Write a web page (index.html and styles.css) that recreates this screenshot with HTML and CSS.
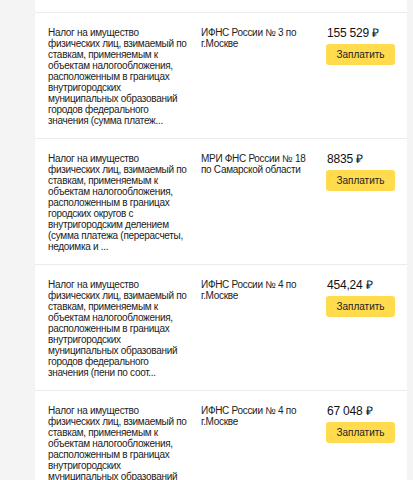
FILE: index.html
```html
<!DOCTYPE html>
<html lang="ru">
  <head>
    <meta charset="UTF-8" />
    <meta name="viewport" content="width=device-width, initial-scale=1.0" />
    <title>Налоги</title>
    <link rel="stylesheet" href="styles.css">
  </head>
  <body>
    <div class="card">
      <div class="card-top"></div>

      <div class="tax-row">
        <div class="tax-name">Налог на имущество<br>физических лиц, взимаемый по<br>ставкам, применяемым к<br>объектам налогообложения,<br>расположенным в границах<br>внутригородских<br>муниципальных образований<br>городов федерального<br>значения (сумма платеж...</div>
        <div class="tax-org">ИФНС России № 3 по<br>г.Москве</div>
        <div class="tax-pay">
          <div class="tax-sum">155 529 ₽</div>
          <button class="pay-btn">Заплатить</button>
        </div>
      </div>

      <div class="tax-row">
        <div class="tax-name">Налог на имущество<br>физических лиц, взимаемый по<br>ставкам, применяемым к<br>объектам налогообложения,<br>расположенным в границах<br>городских округов с<br>внутригородским делением<br>(сумма платежа (перерасчеты,<br>недоимка и ...</div>
        <div class="tax-org">МРИ ФНС России № 18<br>по Самарской области</div>
        <div class="tax-pay">
          <div class="tax-sum">8835 ₽</div>
          <button class="pay-btn">Заплатить</button>
        </div>
      </div>

      <div class="tax-row">
        <div class="tax-name">Налог на имущество<br>физических лиц, взимаемый по<br>ставкам, применяемым к<br>объектам налогообложения,<br>расположенным в границах<br>внутригородских<br>муниципальных образований<br>городов федерального<br>значения (пени по соот...</div>
        <div class="tax-org">ИФНС России № 4 по<br>г.Москве</div>
        <div class="tax-pay">
          <div class="tax-sum">454,24 ₽</div>
          <button class="pay-btn">Заплатить</button>
        </div>
      </div>

      <div class="tax-row">
        <div class="tax-name">Налог на имущество<br>физических лиц, взимаемый по<br>ставкам, применяемым к<br>объектам налогообложения,<br>расположенным в границах<br>внутригородских<br>муниципальных образований<br>городов федерального<br>значения (сумма платеж...</div>
        <div class="tax-org">ИФНС России № 4 по<br>г.Москве</div>
        <div class="tax-pay">
          <div class="tax-sum">67 048 ₽</div>
          <button class="pay-btn">Заплатить</button>
        </div>
      </div>
    </div>
  </body>
</html>
```

FILE: styles.css
```css
body {
  margin: 0;
  background-color: #f4f4f4;
  font-family: "Liberation Sans", Arial, sans-serif;
  color: #222;
  overflow: hidden;
}
.card {
  margin-left: 35px;
  width: 372px;
  background-color: white;
}
.card-top {
  height: 12px;
}
.tax-row {
  display: flex;
  gap: 13px;
  padding: 14px 0 12px 13px;
  border-top: 1px solid #ebebeb;
}
.tax-name {
  width: 140px;
  font-size: 10px;
  line-height: 11px;
  letter-spacing: -0.3px;
  white-space: nowrap;
}
.tax-org {
  width: 112px;
  font-size: 10px;
  line-height: 11px;
  letter-spacing: -0.3px;
  white-space: nowrap;
}
.tax-pay {
  display: flex;
  flex-direction: column;
  align-items: flex-start;
}
.tax-sum {
  font-size: 12px;
  line-height: 14px;
  margin: -1px 0 4px 1px;
  letter-spacing: -0.2px;
  color: #111;
}
.pay-btn {
  width: 69px;
  height: 21px;
  padding: 0;
  border: none;
  border-radius: 3px;
  background-color: #ffdb4d;
  font-family: inherit;
  font-size: 10px;
  color: #222;
  cursor: pointer;
}
.pay-btn:hover {
  background-color: #ffd633;
}
```
